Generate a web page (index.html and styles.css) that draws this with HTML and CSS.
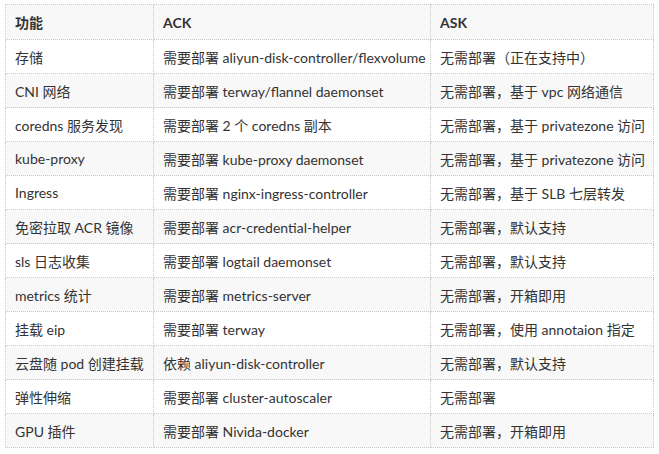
FILE: index.html
```html
<!DOCTYPE html>
<html>
<head>
<meta charset="utf-8">
<link rel="stylesheet" href="styles.css">
</head>
<body>
<table class="cmp">
  <colgroup><col class="c1"><col class="c2"><col class="c3"></colgroup>
  <thead>
    <tr><th>功能</th><th>ACK</th><th>ASK</th></tr>
  </thead>
  <tbody>
    <tr><td>存储</td><td>需要部署 aliyun-disk-controller/flexvolume</td><td>无需部署（正在支持中）</td></tr>
    <tr><td>CNI 网络</td><td>需要部署 terway/flannel daemonset</td><td>无需部署，基于 vpc 网络通信</td></tr>
    <tr><td>coredns 服务发现</td><td>需要部署 2 个 coredns 副本</td><td>无需部署，基于 privatezone 访问</td></tr>
    <tr><td>kube-proxy</td><td>需要部署 kube-proxy daemonset</td><td>无需部署，基于 privatezone 访问</td></tr>
    <tr><td>Ingress</td><td>需要部署 nginx-ingress-controller</td><td>无需部署，基于 SLB 七层转发</td></tr>
    <tr><td>免密拉取 ACR 镜像</td><td>需要部署 acr-credential-helper</td><td>无需部署，默认支持</td></tr>
    <tr><td>sls 日志收集</td><td>需要部署 logtail daemonset</td><td>无需部署，默认支持</td></tr>
    <tr><td>metrics 统计</td><td>需要部署 metrics-server</td><td>无需部署，开箱即用</td></tr>
    <tr><td>挂载 eip</td><td>需要部署 terway</td><td>无需部署，使用 annotaion 指定</td></tr>
    <tr><td>云盘随 pod 创建挂载</td><td>依赖 aliyun-disk-controller</td><td>无需部署，默认支持</td></tr>
    <tr><td>弹性伸缩</td><td>需要部署 cluster-autoscaler</td><td>无需部署</td></tr>
    <tr><td>GPU 插件</td><td>需要部署 Nivida-docker</td><td>无需部署，开箱即用</td></tr>
  </tbody>
</table>
</body>
</html>
```
FILE: styles.css
```css
html, body {
  background: #ffffff;
}
body {
  margin: 4px 0 0 5px;
  font-family: "Lato", "Noto Sans CJK SC", sans-serif;
  font-size: 14px;
  color: #333333;
}
.cmp {
  border-collapse: collapse;
  table-layout: fixed;
  width: 648px;
}
.c1 { width: 148px; }
.c2 { width: 277px; }
.c3 { width: 223px; }
.cmp th,
.cmp td {
  border: 1px dotted #c8c8c8;
  padding: 0 9px;
  height: 33px;
  text-align: left;
  white-space: nowrap;
  vertical-align: middle;
}
.cmp th {
  height: 34px;
  font-weight: bold;
  background: #f8f8f8;
}
.cmp tbody tr:nth-child(even) td {
  background: #f8f8f8;
}
```
